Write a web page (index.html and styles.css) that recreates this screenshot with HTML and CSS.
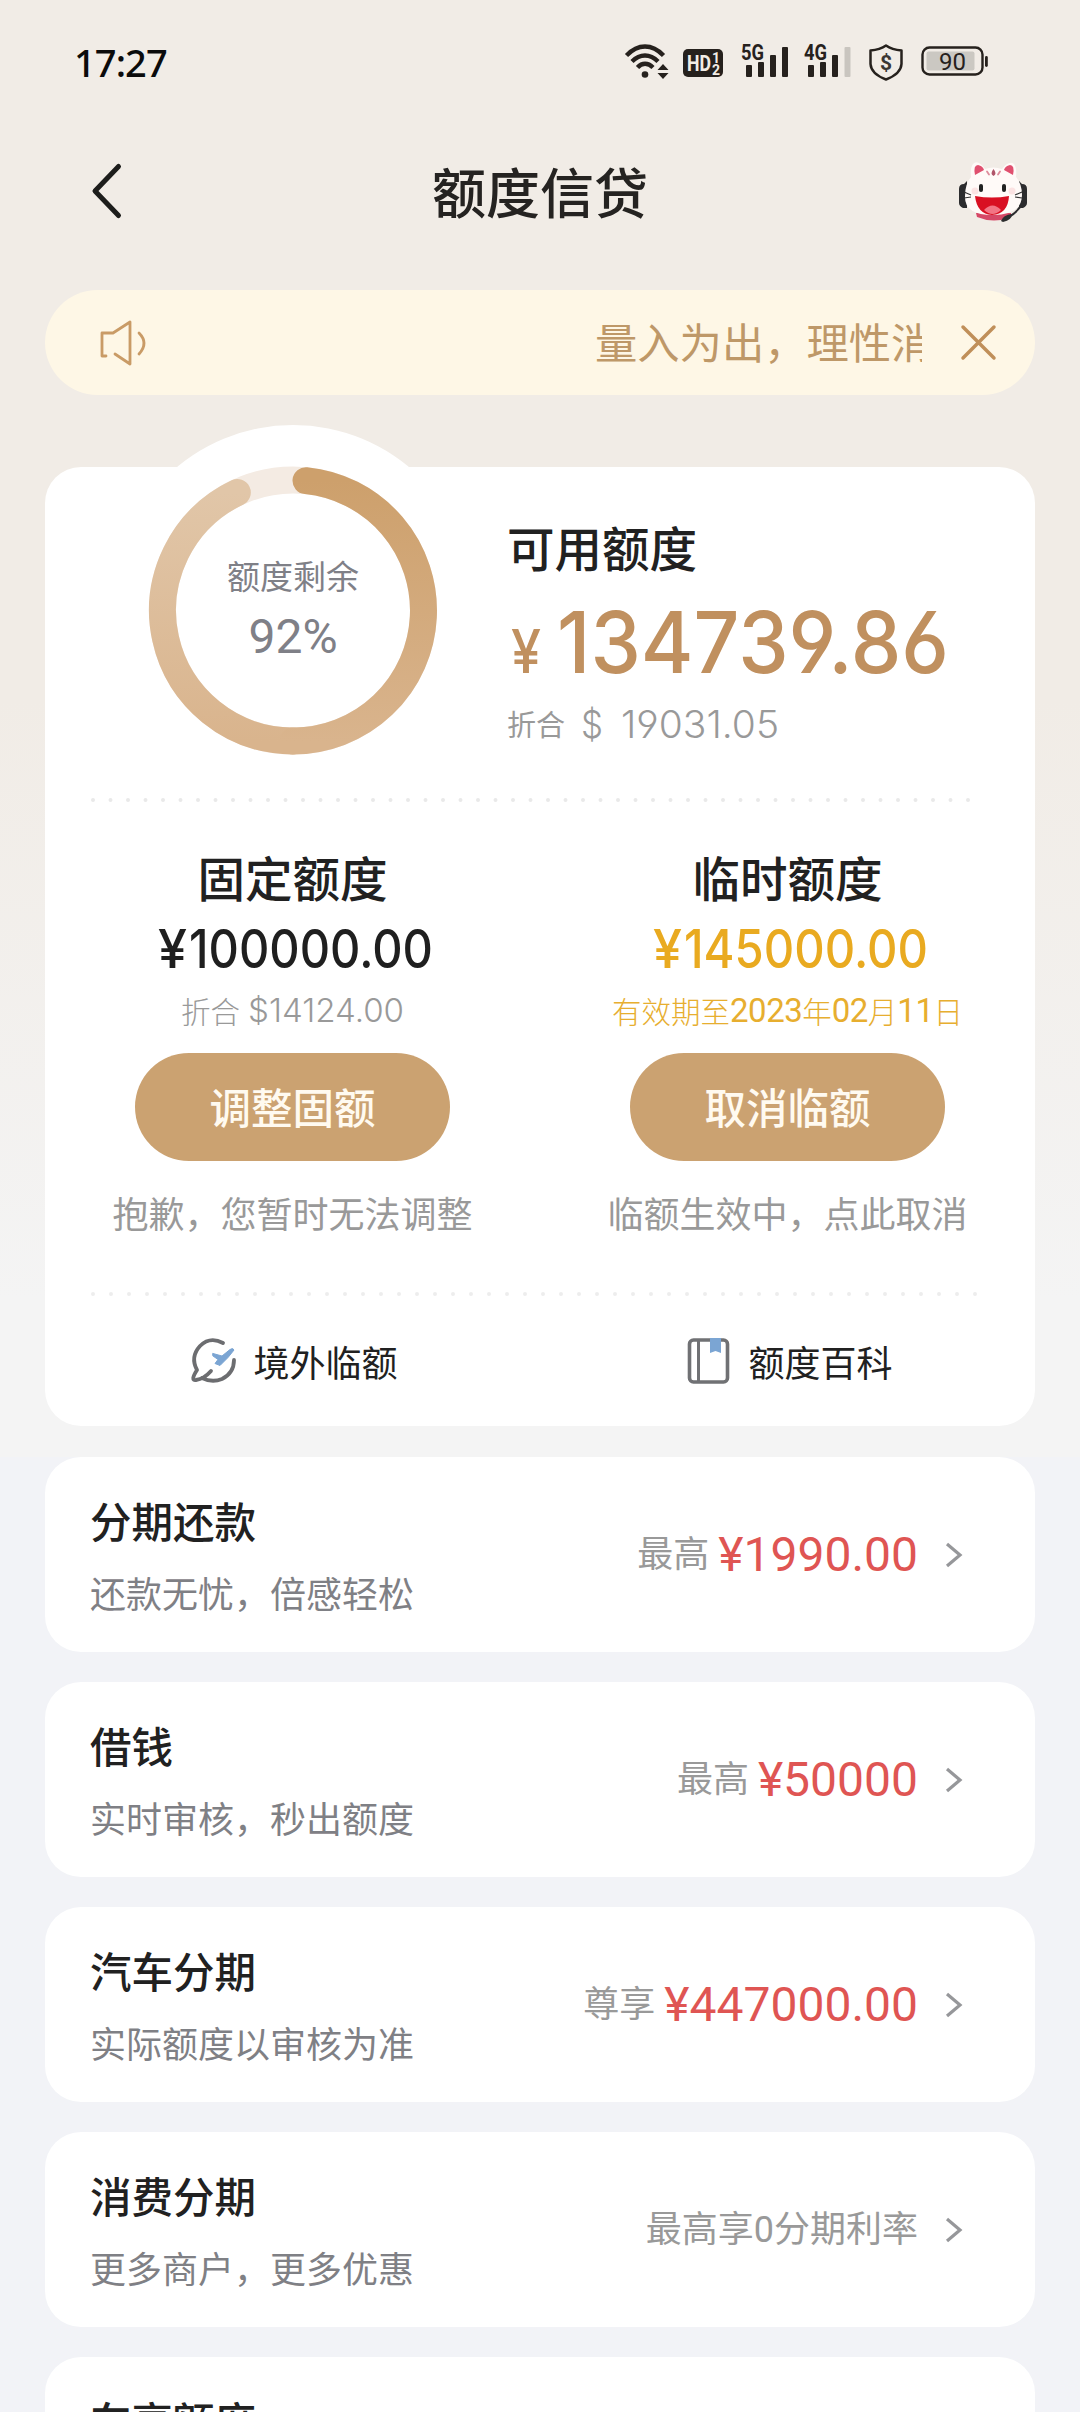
FILE: index.html
```html
<!DOCTYPE html>
<html lang="zh-CN">
<head>
<meta charset="utf-8">
<title>额度信贷</title>
<link rel="stylesheet" href="styles.css">
</head>
<body>
<div class="screen">
  <div class="statusbar">
    <span class="clock">17:27</span>
    <div class="indicators">
      <svg class="wifi" width="46" height="36" viewBox="0 0 46 36" fill="none" stroke="#26211d" stroke-width="4.400">
        <path d="M1.500 11.500C13-.5 27-.5 38.500 11.500"/><path d="M7 17.500C15 9.500 25 9.500 33 17.500"/><path d="M12.500 23.500C17 18.500 23 18.500 28 23.500"/>
        <circle cx="20" cy="30.500" r="3.300" fill="#26211d" stroke="none"/>
        <path d="M32.500 26l5.500-6 5.500 6zM32.500 29l5.500 6 5.500-6z" fill="#26211d" stroke="none"/>
      </svg>
      <svg class="hd" width="40" height="28" viewBox="0 0 40 28">
        <rect width="40" height="28" rx="5" fill="#26211d"/>
        <text x="4" y="22" font-size="22" font-weight="700" textLength="24" lengthAdjust="spacingAndGlyphs" fill="#f2ede6">HD</text>
        <text x="29" y="13.500" font-size="14" font-weight="700" fill="#f2ede6">1</text>
        <text x="29" y="25.500" font-size="14" font-weight="700" fill="#f2ede6">2</text>
      </svg>
      <svg class="net5" width="47" height="34" viewBox="0 0 47 34" fill="#26211d">
        <text x="-1" y="16" font-size="21.500" font-weight="700" textLength="23" lengthAdjust="spacingAndGlyphs">5G</text>
        <rect x="4" y="21" width="6" height="12" rx="1"/><rect x="16" y="18" width="6" height="15" rx="1"/><rect x="28" y="11" width="6" height="22" rx="1"/><rect x="40" y="3" width="6" height="30" rx="1"/>
      </svg>
      <svg class="net4" width="47" height="34" viewBox="0 0 47 34" fill="#26211d">
        <text x="-1" y="16" font-size="21.500" font-weight="700" textLength="23" lengthAdjust="spacingAndGlyphs">4G</text>
        <rect x="3" y="21" width="6" height="12" rx="1"/><rect x="15" y="18" width="6" height="15" rx="1"/><rect x="27" y="11" width="6" height="22" rx="1"/><rect x="39.500" y="3" width="6" height="30" rx="1" fill="#c9c5bf"/>
      </svg>
      <svg class="shield" width="34" height="37" viewBox="0 0 34 37">
        <path d="M17 1.500C12 5 7 6 1.500 6.500V20C2 28 9 32.500 17 35.500 25 32.500 32 28 32.500 20V6.500C27 6 22 5 17 1.500Z" fill="none" stroke="#26211d" stroke-width="2.500" stroke-linejoin="round"/>
        <text x="17" y="25.500" font-size="21" font-weight="700" text-anchor="middle" fill="#3b3733">$</text>
      </svg>
      <svg class="battery" width="68" height="31" viewBox="0 0 68 31">
        <rect x="1.500" y="1.500" width="60" height="27" rx="7" fill="none" stroke="#26211d" stroke-width="2.400"/>
        <rect x="5.500" y="5.500" width="48" height="19" rx="2" fill="#cbc8c2"/>
        <rect x="64" y="10" width="2.800" height="11" rx="1.400" fill="#26211d"/>
        <text x="31.500" y="24" font-size="24" text-anchor="middle" fill="#26211d">90</text>
      </svg>
    </div>
  </div>

  <header class="navbar">
    <svg class="back" width="34" height="58" viewBox="0 0 34 58" fill="none" stroke="#1d1d1b" stroke-width="5" stroke-linecap="round" stroke-linejoin="round"><path d="M29.500 4.500L6 29l23.500 24.500"/></svg>
    <h1>额度信贷</h1>
    <svg class="mascot" width="70" height="64" viewBox="0 0 70 64">
      <path d="M1 29q0-5 5-5l3-3v27H5q-4-2-4-5zM69 29q0-5-5-5l-3-3v27h4q4-2 4-5z" fill="#2c2c2e"/>
      <path d="M18 53h35v4q-17 7-34 0z" fill="#d64867"/>
      <path d="M15 4q5-5 12 5 8-3 17 0 7-9 12-5 3 4 2 13 6 7 6 18 0 20-29 20T7 36q0-12 6-19-1-9 2-13z" fill="#fffaf8"/>
      <path d="M17 15q-2-10 3-10 5 1 6 5zM55 15q2-10-3-10-5 1-6 5z" fill="#e0506f"/>
      <path d="M35.500 9q-4 5 0 7 4-2 0-7z" fill="#b0556a"/><path d="M29 11.500l2 3M42 11.500l-2 3" fill="none" stroke="#dd8b9b" stroke-width="1.800" stroke-linecap="round"/>
      <rect x="21" y="24" width="4" height="8" rx="2" fill="#222"/><rect x="44" y="24" width="4" height="8" rx="2" fill="#222"/>
      <circle cx="17" cy="31" r="3.500" fill="#fce3e3"/><circle cx="54" cy="31" r="3.500" fill="#fce3e3"/>
      <path d="M17 36q17 3 34 0-1 18-17 19-15-1-17-19z" fill="#d90f22"/>
      <path d="M26 50q8.500-9 17 0-8.500 8-17 0z" fill="#f27585"/>
      <path d="M6 32l7 3M6 38l7-1M57 35l7-3M57 37l7 1" stroke="#333" stroke-width="1.200"/>
      <path d="M65 42q-4 9-14 15" fill="none" stroke="#2c2c2e" stroke-width="2"/>
      <path d="M43 61q2-6 11-7 0 6-9 8z" fill="#2c2c2e"/>
    </svg>
  </header>

  <div class="notice">
    <svg width="50" height="48" viewBox="0 0 50 48" fill="none" stroke="#c99b66" stroke-width="2.800" stroke-linecap="round" stroke-linejoin="round">
      <path d="M8 37H4V14h11L32 3v42L17 35M41 14q10 10 0 21"/>
    </svg>
    <div class="ticker"><span>量入为出，理性消</span></div>
    <svg class="close" width="34" height="34" viewBox="0 0 34 34" stroke="#c08f59" stroke-width="3.500" stroke-linecap="round"><path d="M1 1l31 31M32 1L1 32"/></svg>
  </div>

  <main class="quota">
    <section class="summary">
      <div class="gauge">
        <svg width="362" height="362" viewBox="0 0 362 362">
          <defs>
            <linearGradient id="right" x1="0" y1="0" x2="0" y2="1"><stop offset="0" stop-color="#cda06c"/><stop offset="1" stop-color="#d9b48d"/></linearGradient>
            <linearGradient id="left" x1="0" y1="0" x2="0" y2="1"><stop offset="0" stop-color="#e1c6a8"/><stop offset="1" stop-color="#d9b48d"/></linearGradient>
          </defs>
          <circle cx="181" cy="181" r="181" fill="#fff"/>
          <circle cx="181" cy="185.500" r="130.500" fill="none" stroke="#f4ebe3" stroke-width="27"/>
          <path d="M180.500 316A130.500 130.500 0 0 1 125.300 67.500" fill="none" stroke="url(#left)" stroke-width="27" stroke-linecap="round"/>
          <path d="M194 55.650A130.500 130.500 0 0 1 181 316" fill="none" stroke="url(#right)" stroke-width="27" stroke-linecap="round"/>
        </svg>
        <div class="gauge-text"><span>额度剩余</span><b>92%</b></div>
      </div>
      <div class="available">
        <h2>可用额度</h2>
        <svg class="amount" width="450" height="76" viewBox="0 0 450 76"><text x="4" y="68" font-size="60" textLength="30" lengthAdjust="spacingAndGlyphs">¥</text><text x="50" y="68" font-size="85" textLength="392" lengthAdjust="spacingAndGlyphs">134739.86</text></svg>
        <div class="usd">折合<svg width="212" height="46" viewBox="0 0 212 46"><text x="9" y="34.500" font-size="38" textLength="22" lengthAdjust="spacingAndGlyphs">$</text><text x="49" y="34.500" font-size="38" textLength="158" lengthAdjust="spacingAndGlyphs">19031.05</text></svg></div>
      </div>
    </section>
    <svg class="dots" width="894" height="6"><path d="M0 3H892" stroke="#e9e9e9" stroke-width="4" stroke-linecap="round" stroke-dasharray="0 17.500"/></svg>
    <section class="pair">
      <div class="limit">
        <h2>固定额度</h2>
        <svg class="num" width="280" height="50" viewBox="0 0 280 50"><text x="5" y="43" font-size="53" textLength="29" lengthAdjust="spacingAndGlyphs">¥</text><text x="36" y="43" font-size="53" textLength="244" lengthAdjust="spacingAndGlyphs">100000.00</text></svg>
        <p class="note">折合 <svg width="156" height="32" viewBox="0 0 156 32"><text x="0" y="28" font-size="32" textLength="156" lengthAdjust="spacingAndGlyphs">$14124.00</text></svg></p>
        <button>调整固额</button>
        <p class="hint">抱歉，您暂时无法调整</p>
      </div>
      <div class="limit temp">
        <h2>临时额度</h2>
        <svg class="num" width="280" height="50" viewBox="0 0 280 50"><text x="5" y="43" font-size="53" textLength="29" lengthAdjust="spacingAndGlyphs">¥</text><text x="36" y="43" font-size="53" textLength="244" lengthAdjust="spacingAndGlyphs">145000.00</text></svg>
        <p class="note">有效期至<i>2023</i>年<i>02</i>月<i>11</i>日</p>
        <button>取消临额</button>
        <p class="hint">临额生效中，点此取消</p>
      </div>
    </section>
    <svg class="dots" width="894" height="6"><path d="M0 3H892" stroke="#ededed" stroke-width="4" stroke-linecap="round" stroke-dasharray="0 18"/></svg>
    <nav class="links">
      <a><svg width="46" height="48" viewBox="0 0 46 48" fill="none" stroke="#6c6d70" stroke-width="3.800" stroke-linecap="round"><path d="M32 6Q19-1 9 9-1 20 6 33M43 23Q43 36 31 42 21 46 11 41M6 33Q-1 44 5 43 13 42 20 34"/><path d="M22 16.500l9 2.500 8-6.500q3-2 4 .5l-6 7.500-8 8-5-2 3-4-5-3.500z" fill="#7ba5d3" stroke="#7ba5d3" stroke-width="1"/></svg>境外临额</a>
      <a><svg width="46" height="48" viewBox="0 0 46 48" fill="none" stroke="#707174" stroke-width="3.600"><rect x="3.500" y="3" width="38" height="42" rx="4"/><path d="M12.500 3v42" stroke-width="3"/><path d="M24 1h11v15l-5.500-2-5.500 2z" fill="#7ba5d3" stroke="none"/></svg>额度百科</a>
    </nav>
  </main>

  <section class="products">
    <article class="item"><div><h3>分期还款</h3><p>还款无忧，倍感轻松</p></div><div class="offer">最高<b>¥1990.00</b></div><svg width="20" height="28" viewBox="0 0 20 28"><path d="M3 3l13 11L3 25"/></svg></article>
    <article class="item"><div><h3>借钱</h3><p>实时审核，秒出额度</p></div><div class="offer">最高<b>¥50000</b></div><svg width="20" height="28" viewBox="0 0 20 28"><path d="M3 3l13 11L3 25"/></svg></article>
    <article class="item"><div><h3>汽车分期</h3><p>实际额度以审核为准</p></div><div class="offer">尊享<b>¥447000.00</b></div><svg width="20" height="28" viewBox="0 0 20 28"><path d="M3 3l13 11L3 25"/></svg></article>
    <article class="item"><div><h3>消费分期</h3><p>更多商户，更多优惠</p></div><div class="offer">最高享0分期利率</div><svg width="20" height="28" viewBox="0 0 20 28"><path d="M3 3l13 11L3 25"/></svg></article>
    <article class="item"><div><h3>车享额度</h3></div></article>
  </section>
</div>
</body>
</html>
```
FILE: styles.css
```css
* { box-sizing: border-box; margin: 0; padding: 0; }
body { background: #f2f3f7; font-family: Roboto, "Noto Sans CJK SC", sans-serif; color: #212121; }
svg { display: block; flex: none; overflow: visible; }
h1, h2, h3 { font-weight: 500; }
i { font-style: normal; }

.screen {
  height: 2412px;
  overflow: hidden;
  padding: 0 45px;
  display: flex;
  flex-direction: column;
  background: linear-gradient(#f1ece6 0, #f1ece6 700px, #f4f4f4 1300px, #f4f4f4 1457px, #f2f3f7 1457px);
}
.statusbar { height: 124px; flex: none; display: flex; justify-content: space-between; padding: 0 0 0 29px; }
.clock { font: 500 38px/50px "Noto Sans", sans-serif; letter-spacing: -.9px; color: #0b0b0b; margin-top: 37px; }
.indicators { display: flex; align-items: flex-start; padding-right: 46px; margin-top: 44px; }
.indicators text { font-family: Roboto, sans-serif; }
.hd { margin: 5px 0 0 12px; }
.net5 { margin: 0 0 0 19px; }
.net4 { margin: 0 0 0 16px; }
.shield { margin-left: 17px; }
.battery { margin: 2px 0 0 18px; }

.navbar { height: 166px; flex: none; display: grid; grid-template-columns: 82px 1fr 82px; padding: 36px 0 0; align-items: start; }
.back { margin: 2px 0 0 44px; }
.navbar h1 { text-align: center; font-size: 54px; line-height: 66px; padding-top: 3px; color: #252321; }
.mascot { margin: 0 0 0 5px; }

.notice { height: 105px; flex: none; border-radius: 53px; background: #fef7e6; display: flex; align-items: center; padding: 0 39px 0 53px; }
.ticker { flex: 1; margin-right: 40px; padding: 5px 0 0 447px; overflow: hidden; white-space: nowrap; font-size: 42.300px; line-height: 60px; color: #be9868; }

.quota { height: 959px; flex: none; margin-top: 72px; background: #fff; border-radius: 36px; }
.summary { height: 330px; display: flex; }
.gauge { width: 362px; height: 362px; margin: -42px 0 0 67px; display: grid; flex: none; }
.gauge > * { grid-area: 1 / 1; }
.gauge-text { display: flex; flex-direction: column; align-items: center; padding-top: 129px; color: #7f8087; z-index: 1; }
.gauge-text span { font-size: 33px; line-height: 48px; }
.gauge-text b { font-size: 48px; font-weight: 400; line-height: 56px; margin-top: 7px; }
.available { padding: 56px 0 0 33px; }
.available h2, .limit h2 { font-size: 47.500px; line-height: 56px; }
.amount { margin-top: 26px; fill: #c0905f; }
.amount text, .num text, .note text, .usd text { font-family: Inter, sans-serif; font-weight: 500; font-feature-settings: "cv03", "cv04"; }
.usd { display: flex; align-items: center; font-size: 29px; line-height: 46px; margin-top: 22px; color: #999; }
.usd svg { fill: #999; margin-left: 7px; }
.usd text, .note text { font-weight: 300; }
.dots { margin: 0 auto; }

.pair { display: grid; grid-template-columns: 1fr 1fr; height: 488px; padding-top: 50px; }
.limit { display: flex; flex-direction: column; align-items: center; }
.num { margin-top: 16px; fill: #1f1f1f; }
.note { height: 40px; display: flex; align-items: center; justify-content: center; margin-top: 15px; font-size: 29.500px; font-weight: 300; color: #999; white-space: pre; }
.note svg { fill: #999; margin-left: 1px; }
.note i { font-size: 33px; font-weight: 400; letter-spacing: -.5px; }
.temp .num { fill: #e9aa20; }
.temp .note { color: #e7ae2f; }
.limit button { width: 315px; height: 108px; margin-top: 23px; padding-top: 5px; border: 0; border-radius: 54px; background: #cba271; color: #fffaf0; font: 500 41.500px/60px Roboto, "Noto Sans CJK SC", sans-serif; }
.hint { font-size: 36px; line-height: 50px; margin-top: 30px; color: #999; }

.links { display: grid; grid-template-columns: 1fr 1fr; padding-top: 38px; }
.links a { display: flex; align-items: center; justify-content: center; gap: 16px; height: 52px; font-size: 36px; padding-left: 4px; }

.products { display: flex; flex-direction: column; gap: 30px; margin-top: 31px; }
.item { height: 195px; flex: none; background: #fff; border-radius: 36px; display: grid; grid-template-columns: 1fr auto 20px; column-gap: 26px; align-items: center; padding: 0 71px 0 45px; }
.item > div:first-child { align-self: start; padding-top: 37px; }
.item h3 { font-size: 41.500px; line-height: 60px; }
.item p { font-size: 36px; line-height: 50px; margin-top: 17px; color: #7f8085; }
.offer { display: flex; align-items: center; gap: 9px; font-size: 36px; line-height: 54px; color: #999; }
.offer b { font-size: 48px; font-weight: 400; color: #df5553; }
.item svg { fill: none; stroke: #96979a; stroke-width: 3.200; }
```
